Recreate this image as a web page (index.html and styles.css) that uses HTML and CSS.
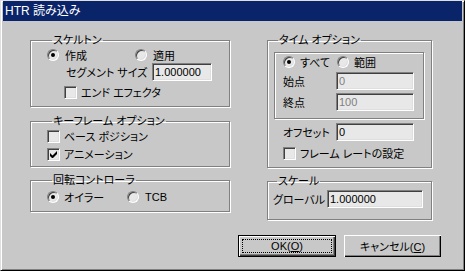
FILE: index.html
```html
<!DOCTYPE html>
<html lang="ja">
<head>
  <meta charset="UTF-8">
  <title>HTR 読み込み</title>
  <link rel="stylesheet" href="styles.css">
</head>
<body>
<div class="window">
  <div class="titlebar">HTR 読み込み</div>

  <div class="client">
    <div class="columns">
      <div class="col-left">
        <fieldset class="group skeleton">
          <legend>スケルトン</legend>
          <div class="row">
            <label class="radio create"><span class="rb checked"></span>作成</label>
            <label class="radio"><span class="rb"></span>適用</label>
          </div>
          <div class="row field seg">
            <span class="field-label">セグメント サイズ</span>
            <input class="edit" type="text" value="1.000000">
          </div>
          <div class="row check-row end">
            <label class="check"><span class="cb"></span>エンド エフェクタ</label>
          </div>
        </fieldset>

        <fieldset class="group keyframe">
          <legend>キーフレーム オプション</legend>
          <div class="row">
            <label class="check"><span class="cb"></span>ベース ポジション</label>
          </div>
          <div class="row second">
            <label class="check">
              <span class="cb">
                <svg width="7" height="7" viewBox="0 0 7 7"><path d="M0 2v3l2 2h1l4-4V0L2.5 4.5z" fill="#000"/></svg>
              </span>アニメーション
            </label>
          </div>
        </fieldset>

        <fieldset class="group rotation">
          <legend>回転コントローラ</legend>
          <div class="row">
            <label class="radio euler"><span class="rb checked"></span>オイラー</label>
            <label class="radio"><span class="rb"></span>TCB</label>
          </div>
        </fieldset>
      </div>

      <div class="col-right">
        <fieldset class="group time">
          <legend>タイム オプション</legend>
          <div class="panel">
            <div class="row">
              <label class="radio all"><span class="rb checked"></span>すべて</label>
              <label class="radio"><span class="rb"></span>範囲</label>
            </div>
            <div class="row field start">
              <span class="field-label">始点</span>
              <input class="edit disabled" type="text" value="0" disabled>
            </div>
            <div class="row field finish">
              <span class="field-label">終点</span>
              <input class="edit disabled" type="text" value="100" disabled>
            </div>
          </div>
          <div class="row field offset">
            <span class="field-label">オフセット</span>
            <input class="edit" type="text" value="0">
          </div>
          <div class="row check-row rate">
            <label class="check"><span class="cb"></span>フレーム レートの設定</label>
          </div>
        </fieldset>

        <fieldset class="group scale">
          <legend>スケール</legend>
          <div class="row field">
            <span class="field-label">グローバル</span>
            <input class="edit wide" type="text" value="1.000000">
          </div>
        </fieldset>
      </div>
    </div>

    <div class="buttons">
      <button class="btn default">OK(<u>O</u>)</button>
      <button class="btn">キャンセル(<u>C</u>)</button>
    </div>
  </div>
</div>
</body>
</html>
```

FILE: styles.css
```css
body {
  margin: 0;
  background: #c8c8c8;
  font-family: "Liberation Sans", "Noto Sans CJK JP", sans-serif;
  font-size: 11px;
  font-feature-settings: "palt";
  color: #000;
}

.window {
  width: 465px;
  height: 271px;
  box-sizing: border-box;
  background: #c8c8c8;
  border-top: 1px solid #dfdfdf;
  border-left: 1px solid #dfdfdf;
  border-right: 1px solid #000;
  border-bottom: 1px solid #000;
  box-shadow: inset 1px 1px 0 #fff, inset -1px -1px 0 #808080;
  padding: 0 2px 2px 2px;
  display: flex;
  flex-direction: column;
}

.titlebar {
  height: 20px;
  line-height: 20px;
  background: #0a246a;
  color: #fff;
  padding-left: 2px;
  font-size: 12px;
}

.client {
  padding: 12px 21px 0 27px;
}

.columns {
  display: flex;
  gap: 37px;
}

.col-left {
  width: 200px;
}

.col-right {
  width: 165px;
}

/* group boxes */
.group {
  margin: 0;
  min-width: 0;
  border: 1px solid #808080;
  box-shadow: inset 1px 1px 0 #fff, 1px 1px 0 #fff;
  padding: 0;
}

.group legend {
  padding: 0 1px;
  margin-left: 5px;
  line-height: 14px;
  height: 14px;
}

.row {
  display: flex;
  align-items: center;
  height: 16px;
}

.row.field {
  height: 18px;
}

.skeleton {
  padding: 0 0 6px 16px;
}

.skeleton .seg {
  padding-left: 19px;
}

.skeleton .seg .field-label {
  width: 86px;
}

.skeleton .seg .edit {
  width: 60px;
}

.skeleton .end {
  margin-top: 3px;
  padding-left: 17px;
}

.keyframe {
  margin-top: 7px;
  padding: 0 0 4px 16px;
}

.keyframe .second {
  margin-top: 2px;
}

.rotation {
  margin-top: 6px;
  padding: 2px 0 6px 16px;
}

/* radio / check */
.radio, .check {
  display: flex;
  align-items: center;
  white-space: nowrap;
}

.rb {
  width: 12px;
  height: 12px;
  box-sizing: border-box;
  border-radius: 50%;
  border: 1px solid;
  border-color: #808080 #fff #fff #808080;
  box-shadow: inset 1px 1px 0 #404040, inset -1px -1px 0 #dfdfdf;
  background: #e8e8e8;
  margin-right: 6px;
  display: flex;
  align-items: center;
  justify-content: center;
}

.rb.checked::after {
  content: "";
  width: 4px;
  height: 4px;
  border-radius: 50%;
  background: #000;
}

.create {
  width: 88px;
}

.euler {
  width: 80px;
}

.euler .rb {
  margin-right: 5px;
}

.cb {
  width: 13px;
  height: 13px;
  box-sizing: border-box;
  border: 1px solid;
  border-color: #808080 #fff #fff #808080;
  box-shadow: inset 1px 1px 0 #404040, inset -1px -1px 0 #dfdfdf;
  background: #e8e8e8;
  margin-right: 4px;
  display: flex;
  align-items: center;
  justify-content: center;
}

.cb svg {
  display: block;
}

/* edits */
.edit {
  box-sizing: border-box;
  height: 18px;
  margin: 0;
  padding: 0 2px;
  border: 1px solid;
  border-color: #808080 #fff #fff #808080;
  box-shadow: inset 1px 1px 0 #404040, inset -1px -1px 0 #dfdfdf;
  background: #e8e8e8;
  font: inherit;
  font-size: 11px;
  color: #000;
  outline: none;
}

.edit.disabled {
  color: #808080;
}

.field-label {
  white-space: nowrap;
}

/* time options */
.time {
  padding: 0 7px 6px 6px;
}

.time legend {
  margin-left: 4px;
}

.panel {
  margin-top: 5px;
  border: 1px solid #808080;
  box-shadow: inset 1px 1px 0 #fff, 1px 1px 0 #fff;
  padding: 1px 0 7px 8px;
}

.panel .all {
  width: 54px;
}

.panel .rb {
  margin-right: 5px;
}

.panel .start {
  margin-top: 2px;
}

.panel .finish {
  margin-top: 3px;
}

.time .field-label {
  width: 53px;
}

.time .edit {
  width: 78px;
}

.time .offset {
  margin-top: 4px;
  padding-left: 9px;
}

.time .rate {
  margin-top: 4px;
  padding-left: 9px;
}

.scale {
  margin-top: 6px;
  padding: 2px 0 11px 5px;
}

.scale legend {
  margin-left: 4px;
}

.scale .field-label {
  width: 54px;
}

.scale .edit {
  width: 96px;
}

/* buttons */
.buttons {
  display: flex;
  justify-content: flex-end;
  gap: 8px;
  margin-top: 15px;
}

.btn {
  width: 97px;
  height: 22px;
  margin: 0;
  padding: 0;
  border: none;
  background: #c8c8c8;
  box-shadow: inset 1px 1px 0 #fff, inset -1px -1px 0 #000, inset -2px -2px 0 #808080;
  font: inherit;
  font-size: 11px;
  color: #000;
}

.btn.default {
  width: 98px;
  border: 1px solid #000;
  box-shadow: inset 1px 1px 0 #fff, inset -1px -1px 0 #404040, inset -2px -2px 0 #808080;
  outline: 1px dotted #000;
  outline-offset: -5px;
}
```
